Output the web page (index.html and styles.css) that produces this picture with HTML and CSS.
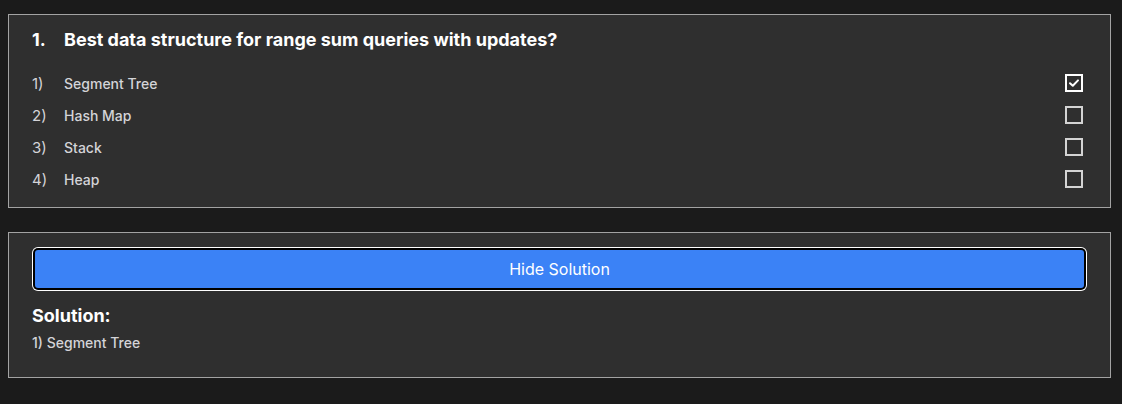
FILE: index.html
```html
<!DOCTYPE html>
<html lang="en">
<head>
<meta charset="utf-8">
<title>Quiz</title>
<link rel="stylesheet" href="styles.css">
</head>
<body>
<div class="page">
  <section class="card question">
    <h2 class="q-title"><span class="q-num">1.</span><span>Best data structure for range sum queries with updates?</span></h2>
    <ul class="options">
      <li class="option"><span class="opt-num">1)</span><span class="opt-label">Segment Tree</span><span class="box checked"><svg viewBox="0 0 14 14" width="14" height="14"><path d="M3 7.2 L5.8 9.8 L11 4.4" fill="none" stroke="#ffffff" stroke-width="2" stroke-linecap="round" stroke-linejoin="round"/></svg></span></li>
      <li class="option"><span class="opt-num">2)</span><span class="opt-label">Hash Map</span><span class="box"></span></li>
      <li class="option"><span class="opt-num">3)</span><span class="opt-label">Stack</span><span class="box"></span></li>
      <li class="option"><span class="opt-num">4)</span><span class="opt-label">Heap</span><span class="box"></span></li>
    </ul>
  </section>
  <section class="card solution">
    <button class="toggle">Hide Solution</button>
    <h3 class="sol-title">Solution:</h3>
    <p class="sol-text">1) Segment Tree</p>
  </section>
</div>
</body>
</html>
```
FILE: styles.css
```css
* { box-sizing: border-box; }
html, body { margin: 0; padding: 0; }
body {
  background: #1b1b1b;
  font-family: Inter, "Noto Sans", "Liberation Sans", sans-serif;
  color: #ffffff;
  height: 404px;
  overflow: hidden;
}
.page {
  padding: 14px 11px 0 8px;
  display: flex;
  flex-direction: column;
  gap: 24px;
}
.card {
  background: #2f2f2f;
  border: 1px solid #a3a3a3;
}
.question {
  padding: 11px 23px 12px 23px;
}
.q-title {
  margin: 0 0 13px 0;
  font-size: 18px;
  line-height: 28px;
  font-weight: 700;
  display: flex;
}
.q-num { width: 32px; flex: none; }
.options {
  list-style: none;
  margin: 0;
  padding: 0;
}
.option {
  display: flex;
  align-items: center;
  height: 32px;
  font-size: 14px;
  font-weight: 500;
  color: #d4d4d8;
}
.opt-num { width: 32px; flex: none; font-size: 15px; font-weight: 400; }
.opt-label { flex: 1; }
.box {
  width: 18px;
  height: 18px;
  border: 2px solid #d4d4d4;
  margin-right: 4px;
  display: flex;
  align-items: center;
  justify-content: center;
}
.box.checked { border-color: #ffffff; }
.solution {
  padding: 14px 23px 24px 23px;
}
.toggle {
  display: block;
  width: calc(100% - 6px);
  margin: 3px;
  height: 38px;
  border: none;
  background: #3b82f6;
  color: #ffffff;
  font-family: inherit;
  font-size: 16px;
  border-radius: 3px;
  box-shadow: 0 0 0 2px #000000, 0 0 0 3px #ffffff;
}
.sol-title {
  margin: 14px 0 4px 0;
  font-size: 18px;
  line-height: 27px;
  font-weight: 700;
}
.sol-text {
  margin: 0;
  font-size: 14px;
  line-height: 20px;
  font-weight: 500;
  color: #d4d4d8;
}
```
